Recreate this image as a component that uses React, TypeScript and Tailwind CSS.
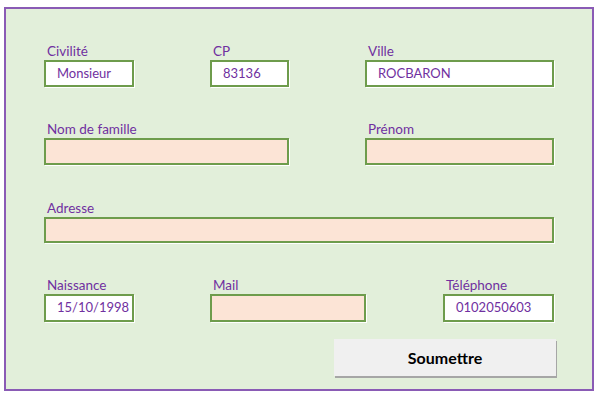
const font = { fontFamily: "Lato, 'Open Sans', sans-serif" };

type FieldProps = { label: string; value?: string; width: string; h?: string; className?: string };

function Field({ label, value, width, h = "h-[27px]", className = "" }: FieldProps) {
  return (
    <div className={`flex flex-col ${width} ${className}`}>
      <span className="h-[16px] pl-[3px] text-[13.5px] leading-[16px] text-[#7030a0]">{label}</span>
      <div
        className={`mt-[1px] flex items-center border-2 border-[#6e9c4c] pl-[11px] text-[13px] text-[#7030a0] shadow-[1px_1px_0_#ffffff] ${h} ${
          value ? "bg-white" : "bg-[#fce4d6]"
        }`}
      >
        {value}
      </div>
    </div>
  );
}

export default function App() {
  return (
    <div className="h-[398px] w-[600px] bg-white pt-[7px] pl-[4px]" style={font}>
      <div className="flex h-[384px] w-[590px] flex-col border-2 border-[#8a5bb5] bg-[#e2efda] pt-[34px] pl-[38px]">
        <div className="flex">
          <Field label="Civilité" value="Monsieur" width="w-[90px]" />
          <Field label="CP" value="83136" width="w-[79px]" className="ml-[76px]" />
          <Field label="Ville" value="ROCBARON" width="w-[189px]" className="ml-[76px]" />
        </div>
        <div className="mt-[34px] flex">
          <Field label="Nom de famille" width="w-[245px]" />
          <Field label="Prénom" width="w-[189px]" className="ml-[76px]" />
        </div>
        <div className="mt-[35px] flex">
          <Field label="Adresse" width="w-[510px]" h="h-[26px]" />
        </div>
        <div className="mt-[34px] flex">
          <Field label="Naissance" value="15/10/1998" width="w-[90px]" h="h-[28px]" />
          <Field label="Mail" width="w-[156px]" h="h-[28px]" className="ml-[76px]" />
          <Field label="Téléphone" value="0102050603" width="w-[111px]" h="h-[28px]" className="ml-[77px]" />
        </div>
        <div className="mt-[17px] flex">
          <button className="ml-[290px] flex h-[37px] w-[222px] items-center justify-center bg-[#f0f0f0] text-[16px] font-bold text-black shadow-[1px_2px_0_#a6a6a6]">
            Soumettre
          </button>
        </div>
      </div>
    </div>
  );
}
